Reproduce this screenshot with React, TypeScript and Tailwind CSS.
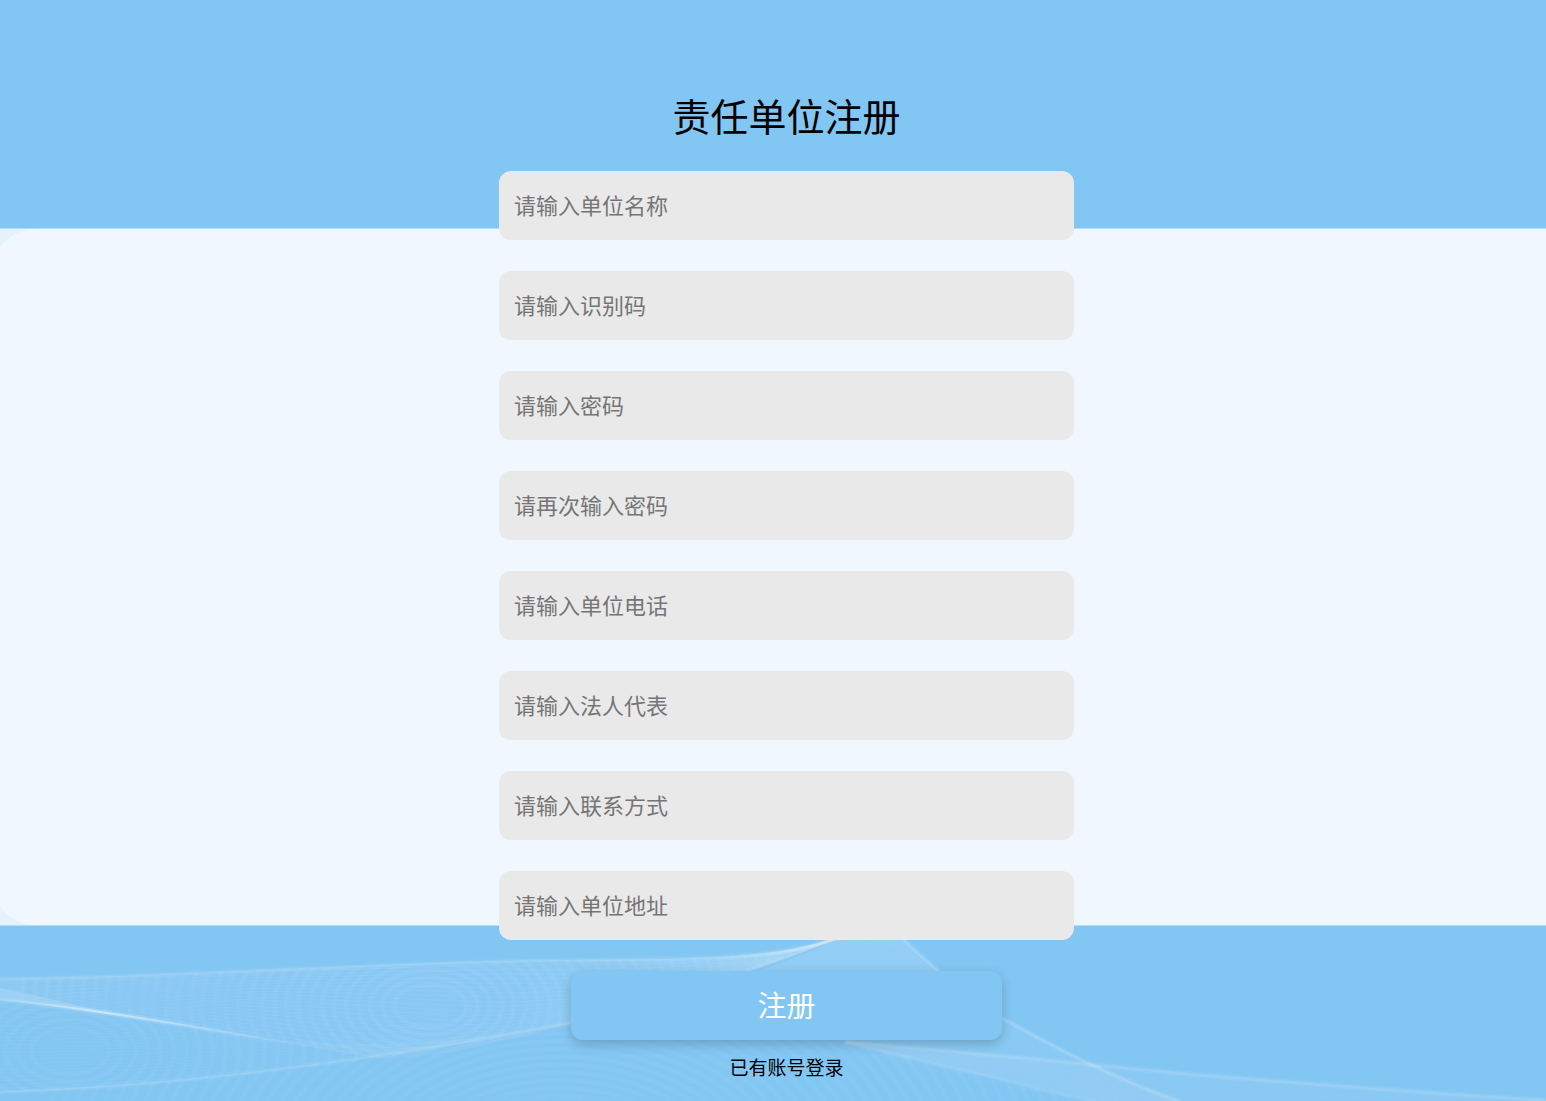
import { useState } from "react";

type Curve = number[];

const fields = [
  { name: "unitName", type: "text", placeholder: "请输入单位名称" },
  { name: "code", type: "text", placeholder: "请输入识别码" },
  { name: "password", type: "password", placeholder: "请输入密码" },
  { name: "confirm", type: "password", placeholder: "请再次输入密码" },
  { name: "unitPhone", type: "tel", placeholder: "请输入单位电话" },
  { name: "legalPerson", type: "text", placeholder: "请输入法人代表" },
  { name: "contact", type: "text", placeholder: "请输入联系方式" },
  { name: "address", type: "text", placeholder: "请输入单位地址" },
];

// Each curve is M x y followed by two cubic segments.
const crest: Curve = [0, 53, 190, 51, 380, 36, 571, 34, 760, 34, 800, 28, 880, -4];
const fold: Curve = [0, 74, 120, 84, 260, 114, 380, 132, 480, 130, 640, 82, 880, -4];
const base: Curve = [0, 166, 190, 160, 380, 132, 571, 97, 660, 76, 760, 44, 880, -4];
const floor: Curve = [0, 230, 190, 214, 420, 190, 571, 176, 680, 160, 760, 150, 845, 176];
const peakRight: Curve = [890, 0, 920, 30, 960, 66, 1002, 92, 1060, 124, 1110, 150, 1180, 176];
const tailTop: Curve = [845, 116, 960, 125, 1080, 138, 1200, 149, 1320, 158, 1430, 168, 1546, 174];
const tailLow: Curve = [845, 116, 900, 130, 950, 142, 1000, 153, 1030, 162, 1060, 169, 1095, 176];
const tailFar: Curve = [845, 116, 900, 140, 1000, 160, 1100, 180, 1180, 184, 1300, 186, 1400, 188];

const veil =
  "M0 53C190 51 380 36 571 34C760 34 800 28 880 -4C760 44 660 76 571 97C510 110 440 121 380 132C260 114 120 84 0 74Z";

const toPath = (c: Curve) =>
  `M${c[0]} ${c[1]} C${c.slice(2, 8).join(" ")} C${c.slice(8).join(" ")}`;

const mix = (a: Curve, b: Curve, t: number) => a.map((v, i) => v + (b[i] - v) * t);

function Mesh({ from, to, count, opacity }: { from: Curve; to: Curve; count: number; opacity: number }) {
  return (
    <g opacity={opacity}>
      {Array.from({ length: count }, (_, i) => (
        <path key={i} d={toPath(mix(from, to, i / (count - 1)))} />
      ))}
    </g>
  );
}

function Ripples({ cx, cy, count, step, clip }: { cx: number; cy: number; count: number; step: number; clip: string }) {
  return (
    <g opacity="0.035" strokeWidth="4" clipPath={clip}>
      {Array.from({ length: count }, (_, i) => (
        <ellipse key={i} cx={cx} cy={cy} rx={(i + 3) * step} ry={(i + 3) * step * 0.6} />
      ))}
    </g>
  );
}

function Ridge({ curve, opacity }: { curve: Curve; opacity: number }) {
  return (
    <>
      <path d={toPath(curve)} strokeWidth="6" opacity={opacity * 0.5} />
      <path d={toPath(curve)} strokeWidth="3" opacity={opacity} />
    </>
  );
}

function Waves() {
  return (
    <svg
      className="h-[175px] w-full"
      viewBox="0 0 1546 175"
      preserveAspectRatio="none"
      fill="none"
      stroke="white"
      aria-hidden="true"
    >
      <defs>
        <linearGradient id="glow" x1="0" x2="1" y1="0" y2="0">
          <stop offset="0" stopColor="white" stopOpacity="0.03" />
          <stop offset="0.6" stopColor="white" stopOpacity="0.06" />
          <stop offset="1" stopColor="white" stopOpacity="0.25" />
        </linearGradient>
        <linearGradient id="peak" x1="0" x2="0" y1="0" y2="1">
          <stop offset="0" stopColor="white" stopOpacity="0.16" />
          <stop offset="0.6" stopColor="white" stopOpacity="0.05" />
          <stop offset="1" stopColor="white" stopOpacity="0.05" />
        </linearGradient>
        <linearGradient id="streak" x1="0" x2="300" y1="0" y2="0" gradientUnits="userSpaceOnUse">
          <stop offset="0" stopColor="white" stopOpacity="0.12" />
          <stop offset="0.36" stopColor="white" stopOpacity="0.42" />
          <stop offset="0.65" stopColor="white" stopOpacity="0.22" />
          <stop offset="1" stopColor="white" stopOpacity="0" />
        </linearGradient>
        <linearGradient id="shine" x1="700" x2="880" y1="0" y2="0" gradientUnits="userSpaceOnUse">
          <stop offset="0" stopColor="white" stopOpacity="0" />
          <stop offset="0.7" stopColor="white" stopOpacity="0.3" />
          <stop offset="1" stopColor="white" stopOpacity="0.2" />
        </linearGradient>
        <clipPath id="upper">
          <path d={veil} />
        </clipPath>
        <clipPath id="lower">
          <path d="M0 74C120 84 260 114 380 132C190 158 100 163 0 166Z" />
        </clipPath>
        <clipPath id="bottom">
          <path d="M0 166C190 160 380 132 571 97L845 116L1095 176H0Z" />
        </clipPath>
      </defs>
      <path d={veil} fill="url(#glow)" stroke="none" />
      <path
        d="M755 46C790 34 830 18 880 -4L890 0C920 30 960 66 1002 92C1060 124 1110 150 1180 176H1095C1000 153 920 135 845 116Z"
        fill="url(#peak)"
        stroke="none"
      />
      <path
        d="M845 116C960 125 1080 138 1200 149C1320 158 1430 168 1546 174V176H1095C1000 153 900 130 845 116Z"
        fill="white"
        opacity="0.05"
        stroke="none"
      />
      <Mesh from={crest} to={fold} count={22} opacity={0.05} />
      <Mesh from={fold} to={base} count={26} opacity={0.04} />
      <Mesh from={crest} to={base} count={30} opacity={0.03} />
      <Mesh from={base} to={floor} count={20} opacity={0.02} />
      <Mesh from={peakRight} to={tailLow} count={20} opacity={0.03} />
      <Mesh from={tailTop} to={tailFar} count={18} opacity={0.03} />
      <Ripples cx={430} cy={80} count={32} step={12} clip="url(#upper)" />
      <Ripples cx={70} cy={125} count={20} step={13} clip="url(#lower)" />
      <Ripples cx={560} cy={240} count={38} step={13} clip="url(#bottom)" />
      <path d="M0 62C40 70 80 80 120 90C80 84 40 77 0 74Z" fill="white" opacity="0.14" stroke="none" />
      <path d="M0 74C90 82 190 100 300 119" stroke="url(#streak)" strokeWidth="2" />
      <path d="M0 74C90 82 190 100 300 119" stroke="url(#streak)" strokeWidth="5" opacity="0.4" />
      <Ridge curve={crest} opacity={0.09} />
      <Ridge curve={base} opacity={0.08} />
      <Ridge curve={peakRight} opacity={0.12} />
      <Ridge curve={tailTop} opacity={0.1} />
      <Ridge curve={tailLow} opacity={0.06} />
      <path d="M700 33C780 31 820 22 880 -4" stroke="url(#shine)" strokeWidth="3" />
    </svg>
  );
}

function Backdrop() {
  return (
    <div className="absolute inset-0 -z-10 flex flex-col overflow-hidden bg-[#82c6f3]">
      <div className="h-57 shrink-0" />
      <div className="flex-1 border-y border-[#b5dcf8] bg-[#e3f2fd]">
        <div className="-ml-2 h-full rounded-l-[44px] bg-[#f0f7ff]" />
      </div>
      <Waves />
    </div>
  );
}

export default function App() {
  const [values, setValues] = useState<Record<string, string>>({});

  return (
    <main className="relative isolate flex min-h-screen flex-col items-center pt-[87px] pb-5 pl-[27px] font-['Noto_Sans_CJK_SC',sans-serif] text-black">
      <Backdrop />
      <h1 className="text-[38px] leading-[56px]">责任单位注册</h1>
      <form
        className="mt-7 flex w-full max-w-[575px] flex-col items-center gap-[31px]"
        onSubmit={(e) => e.preventDefault()}
      >
        {fields.map((f) => (
          <input
            key={f.name}
            name={f.name}
            type={f.type}
            aria-label={f.placeholder}
            placeholder={f.placeholder}
            value={values[f.name] ?? ""}
            onChange={(e) => setValues({ ...values, [f.name]: e.target.value })}
            className="h-[69px] w-full rounded-xl bg-[#e9e9e9] px-[15px] pb-1 text-[22px] outline-none placeholder:text-[#757575]"
          />
        ))}
        <button
          type="submit"
          className="h-[69px] w-3/4 cursor-pointer rounded-xl bg-[#82c6f3] pb-0.5 text-[29px] text-white shadow-[0_4px_12px_rgba(0,0,0,0.2)]"
        >
          注册
        </button>
      </form>
      <a href="#login" className="mt-[13px] text-[19px] leading-[27px]">
        已有账号登录
      </a>
    </main>
  );
}
